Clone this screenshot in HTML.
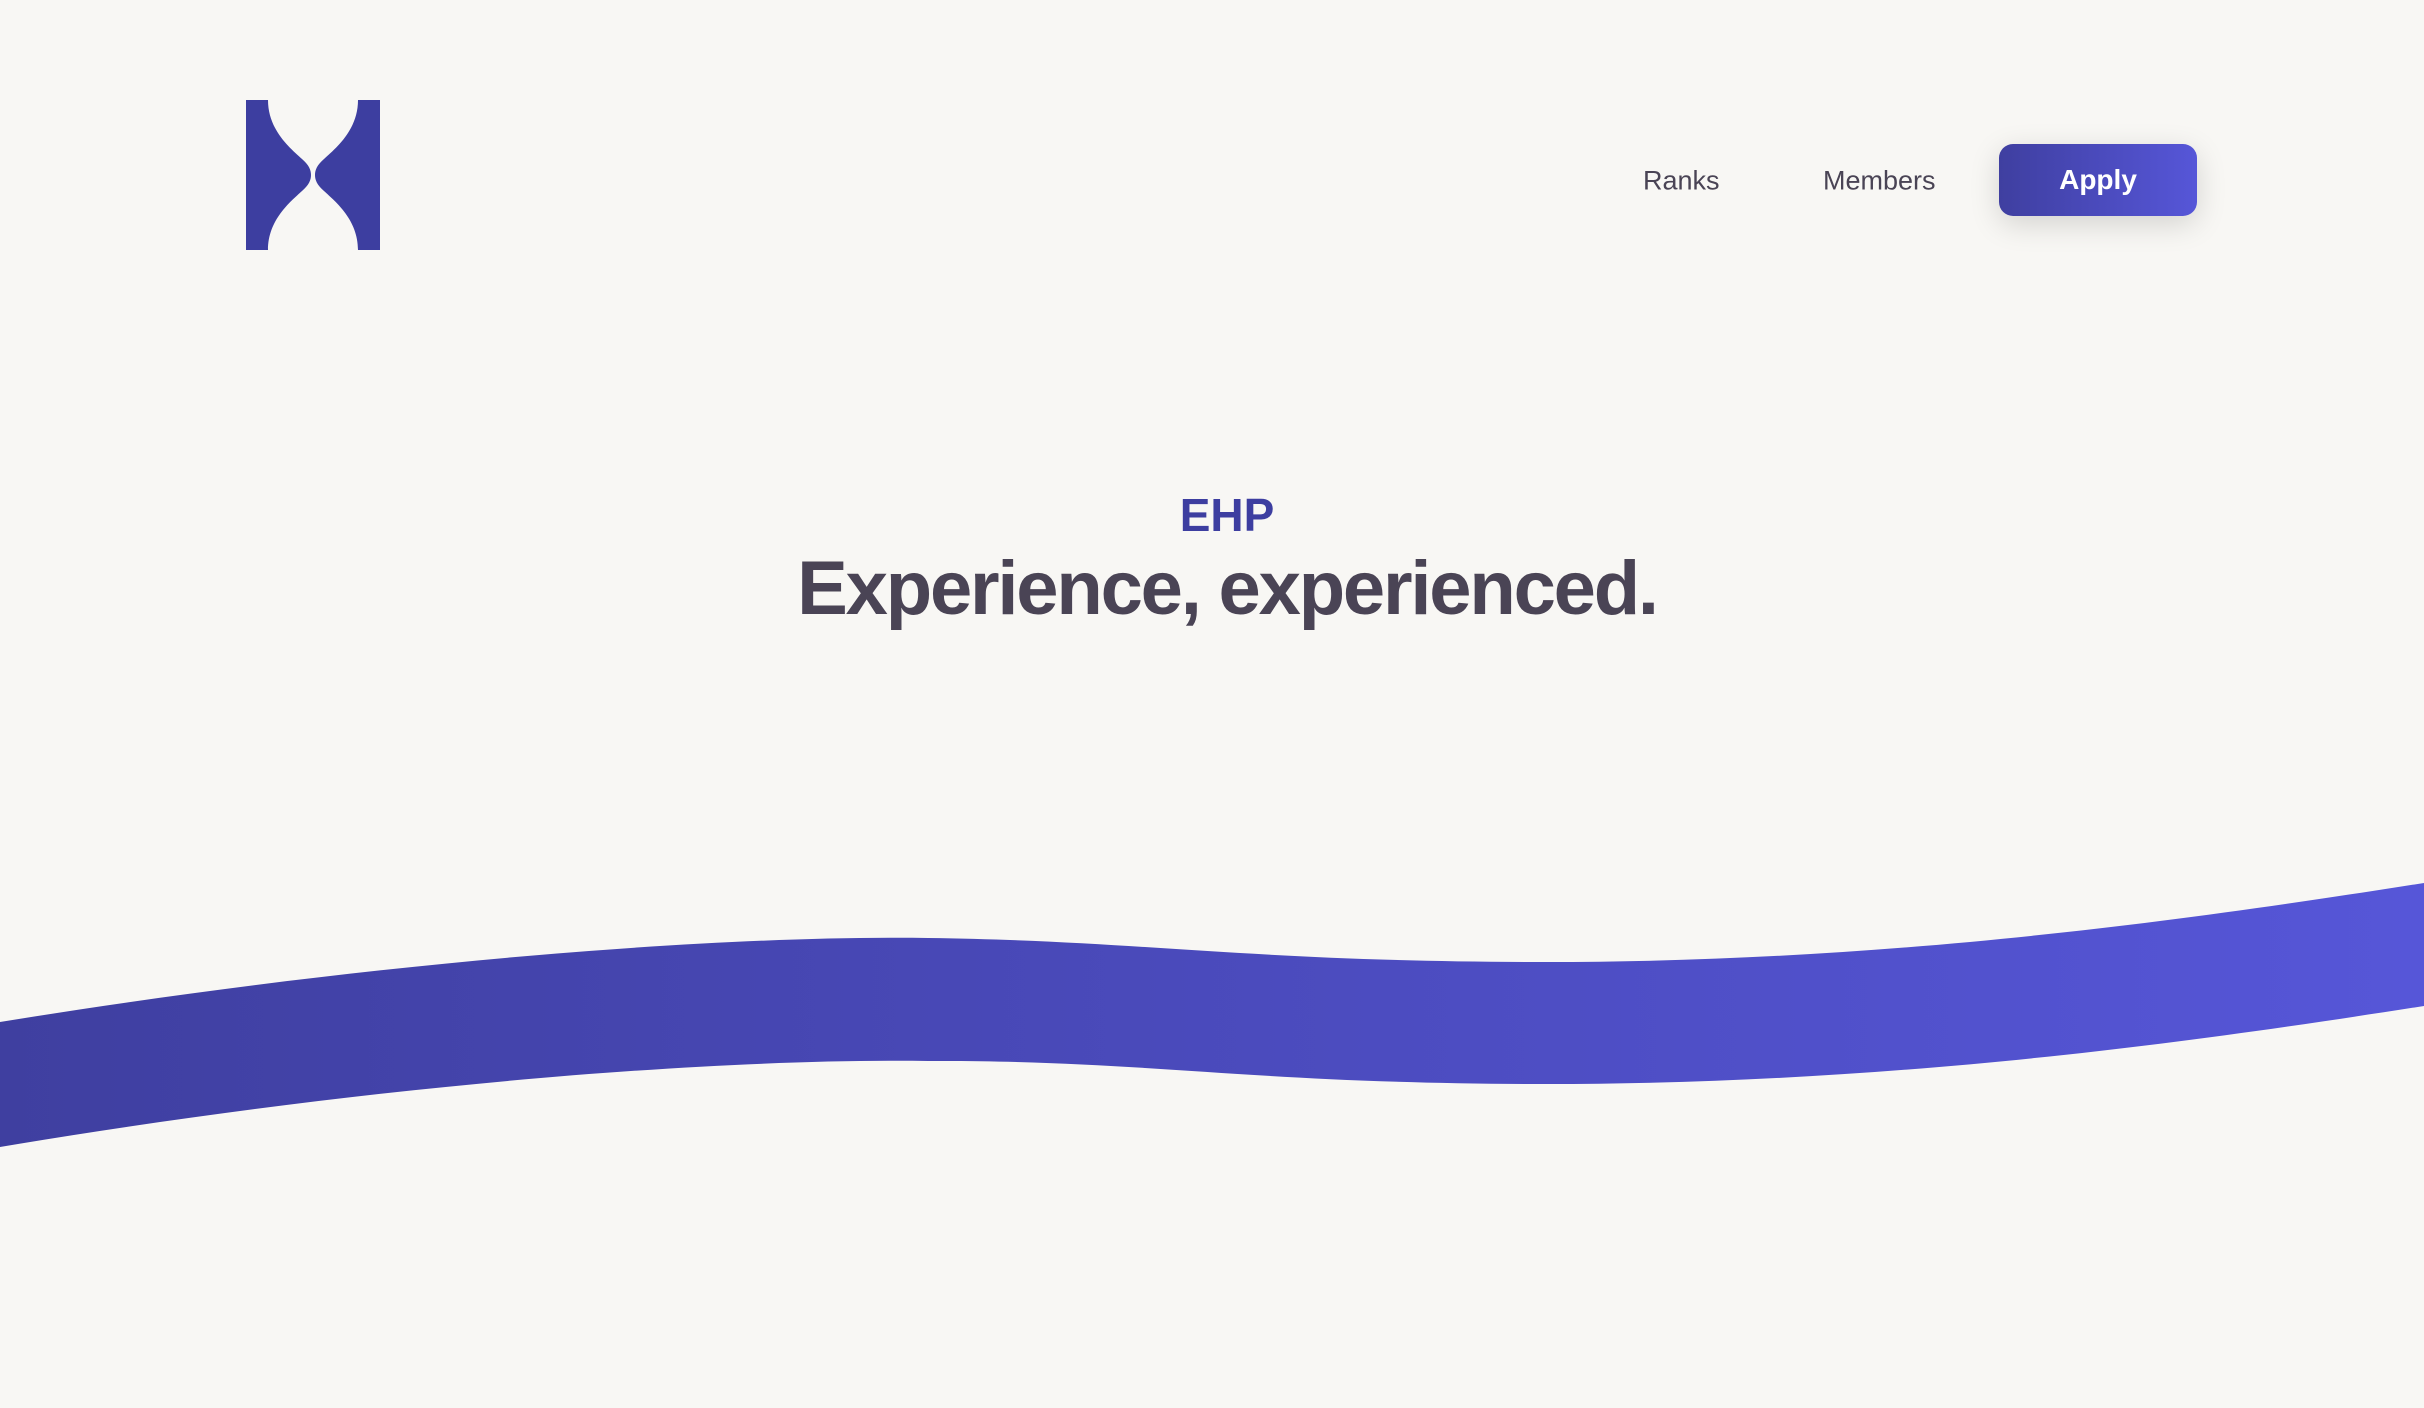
<!DOCTYPE html>
<html><head><meta charset="utf-8"><style>
html,body{margin:0;padding:0;}
body{width:2424px;height:1408px;background:#f8f7f4;position:relative;overflow:hidden;font-family:"Liberation Sans",sans-serif;}
.nav{position:absolute;top:181px;font-size:27px;color:#4a4455;transform:translateY(-50%);}
.btn{position:absolute;left:1999px;top:144px;width:198px;height:72px;border-radius:14px;background:linear-gradient(90deg,#3f3fa0,#5656d8);color:#fff;font-weight:bold;font-size:28px;display:flex;align-items:center;justify-content:center;box-shadow:0 8px 30px rgba(0,0,0,0.15);}
.ehp{position:absolute;left:0;width:2454px;top:488px;text-align:center;font-weight:bold;font-size:46px;color:#3d3ea0;}
.h1{position:absolute;left:0;width:2454px;top:545px;text-align:center;font-weight:bold;font-size:76px;letter-spacing:-2.2px;color:#4a4455;}
</style></head><body>
<svg width="2424" height="1408" style="position:absolute;left:0;top:0">
<defs><linearGradient id="g" x1="0" x2="1" y1="0" y2="0"><stop offset="0" stop-color="#3f3fa0"/><stop offset="1" stop-color="#5656d8"/></linearGradient></defs>
<path fill="#3d3ea0" d="M246 100 H268 C268 130 290 148 302 159 C309 165 311 170 311 175 C311 180 309 185 302 191 C290 202 268 220 268 250 H246 Z"/>
<path fill="#3d3ea0" d="M380 100 H358 C358 130 336 148 324 159 C317 165 315 170 315 175 C315 180 317 185 324 191 C336 202 358 220 358 250 H380 Z"/>
<path fill="url(#g)" d="M0 1022 C350 965 700 935 928 938 C1150 941 1250 962 1546 962 C1900 962 2200 918 2424 883 L2424 1006 C2200 1041 1900 1084 1546 1084 C1250 1084 1150 1060 928 1061 C700 1058 350 1088 0 1147 Z"/>
</svg>
<div class="nav" style="left:1643px">Ranks</div>
<div class="nav" style="left:1823px">Members</div>
<div class="btn">Apply</div>
<div class="ehp">EHP</div>
<div class="h1">Experience, experienced.</div>
</body></html>
